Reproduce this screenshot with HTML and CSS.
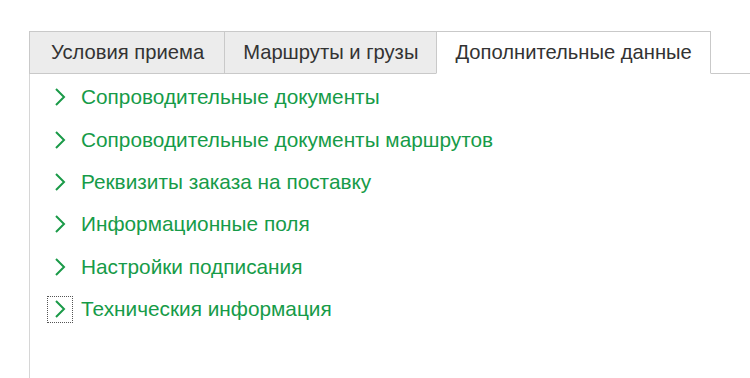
FILE: index.html
```html
<!DOCTYPE html>
<html lang="ru">
<head>
<meta charset="utf-8">
<link rel="stylesheet" href="styles.css">
</head>
<body>
<div class="tabs">
  <div class="tab">Условия приема</div>
  <div class="tab">Маршруты и грузы</div>
  <div class="tab active">Дополнительные данные</div>
  <div class="filler"></div>
</div>
<div class="panel">
  <div class="row"><span class="chev"><svg width="12" height="20" viewBox="0 0 12 20"><polyline points="2,2 10,10 2,18" fill="none" stroke="#1a9a48" stroke-width="2"/></svg></span><span class="label">Сопроводительные документы</span></div>
  <div class="row"><span class="chev"><svg width="12" height="20" viewBox="0 0 12 20"><polyline points="2,2 10,10 2,18" fill="none" stroke="#1a9a48" stroke-width="2"/></svg></span><span class="label">Сопроводительные документы маршрутов</span></div>
  <div class="row"><span class="chev"><svg width="12" height="20" viewBox="0 0 12 20"><polyline points="2,2 10,10 2,18" fill="none" stroke="#1a9a48" stroke-width="2"/></svg></span><span class="label">Реквизиты заказа на поставку</span></div>
  <div class="row"><span class="chev"><svg width="12" height="20" viewBox="0 0 12 20"><polyline points="2,2 10,10 2,18" fill="none" stroke="#1a9a48" stroke-width="2"/></svg></span><span class="label">Информационные поля</span></div>
  <div class="row"><span class="chev"><svg width="12" height="20" viewBox="0 0 12 20"><polyline points="2,2 10,10 2,18" fill="none" stroke="#1a9a48" stroke-width="2"/></svg></span><span class="label">Настройки подписания</span></div>
  <div class="row"><span class="chev focus"><svg width="12" height="20" viewBox="0 0 12 20"><polyline points="2,2 10,10 2,18" fill="none" stroke="#1a9a48" stroke-width="2"/></svg></span><span class="label">Техническия информация</span></div>
</div>
</body>
</html>
```
FILE: styles.css
```css
html, body {
  margin: 0;
  padding: 0;
  background: #ffffff;
  height: 100%;
  overflow: hidden;
}
body {
  font-family: "Liberation Sans", Arial, sans-serif;
  display: flex;
  flex-direction: column;
}
.tabs {
  display: flex;
  margin-top: 31px;
  padding-left: 29px;
  height: 43px;
  box-sizing: border-box;
}
.tab {
  box-sizing: border-box;
  height: 43px;
  padding: 0 18px;
  display: flex;
  align-items: center;
  font-size: 20.2px;
  color: #333333;
  background: #ececec;
  border: 1px solid #c9c9c9;
  border-right: none;
}
.tab:first-child {
  padding: 0 20px 0 21px;
}
.tab.active {
  background: #ffffff;
  border-right: 1px solid #c9c9c9;
  border-bottom-color: #ffffff;
}
.filler {
  flex: 1;
  border-bottom: 1px solid #c9c9c9;
}
.panel {
  flex: 1;
  margin-left: 29px;
  border-left: 1px solid #d6d6d6;
  padding-top: 2px;
}
.row {
  height: 42.4px;
  display: flex;
  align-items: center;
}
.chev {
  box-sizing: border-box;
  width: 26px;
  height: 27px;
  margin-left: 17px;
  margin-right: 8px;
  display: flex;
  align-items: center;
  justify-content: center;
  border: 1px dotted transparent;
}
.chev.focus {
  border-color: #555555;
}
.chev svg {
  display: block;
}
.label {
  font-size: 20.8px;
  color: #169b48;
}
```
